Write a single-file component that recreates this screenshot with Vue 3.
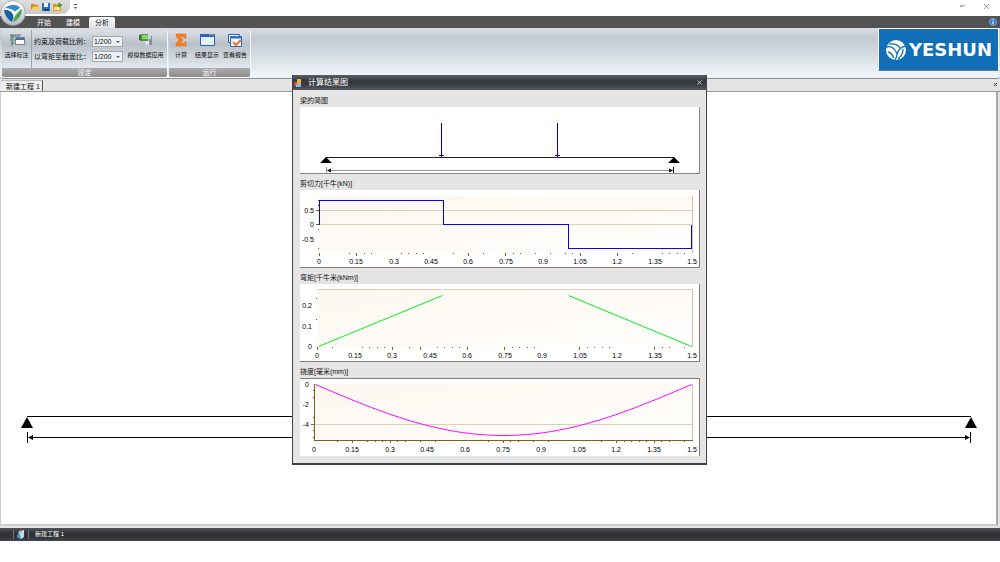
<script setup>
import { ref } from 'vue'

const scaleA = ref('1/200')
const scaleB = ref('1/200')

const xTexts = ['0', '0.15', '0.3', '0.45', '0.6', '0.75', '0.9', '1.05', '1.2', '1.35', '1.5']
const spread = (start, end) =>
  xTexts.map((text, i) => ({ text, x: Math.round(start + ((end - start) * i) / 10) }))

const sag = Array.from({ length: 95 }, (_, i) => {
  const x = 15 + i * 4
  return `${x},${(6 + 51 * Math.sin((Math.PI * i) / 94)).toFixed(1)}`
}).join(' ')

const charts = [
  {
    id: 'shear', title: '剪切力[千牛(kN)]', left: 19, top: 6, bottom: 63, color: '#0000ff',
    grid: [20, 34], major: [19, 56, 168, 205, 280, 317],
    minor: [49, 64, 71, 101, 108, 116, 123, 153, 183, 213, 220, 235, 250, 265, 272, 332, 362, 369, 377, 384],
    yMajor: [20, 34], yMinor: [10, 15, 39, 58],
    yTexts: [{ text: '0.5', y: 23 }, { text: '0', y: 37 }, { text: '-0.5', y: 52 }], yx: 14,
    lines: ['19,34 19,10 143,10 143,34 268,34 268,58 391,58 391,34'], sharp: true
  },
  {
    id: 'moment', title: '弯矩[千牛米(kNm)]', left: 17, top: 5, bottom: 63, color: '#00f020',
    grid: [5], major: [17, 92, 120, 167, 204, 279, 354],
    minor: [32, 62, 69, 77, 84, 109, 137, 144, 152, 159, 212, 219, 227, 234, 287, 294, 302, 309, 362, 369, 384],
    yMajor: [], yMinor: [14, 35],
    yTexts: [{ text: '0.2', y: 24 }, { text: '0.1', y: 45 }, { text: '0', y: 65 }], yx: 12,
    lines: ['18,62 142,11', '268,11 391,62']
  },
  {
    id: 'sag', title: '挠度[毫米(mm)]', left: 14, top: 6, bottom: 62, color: '#ff00ff', axis: true,
    grid: [46], major: [52, 90, 203, 316, 354],
    minor: [37, 67, 75, 82, 97, 105, 120, 135, 188, 210, 218, 233, 248, 301, 324, 331, 339, 346, 361, 369, 384],
    yMajor: [46], yMinor: [12, 19, 39, 52, 59],
    yTexts: [{ text: '0', y: 9 }, { text: '-2', y: 29 }, { text: '-4', y: 49 }], yx: 9,
    lines: [sag]
  }
]
</script>

<template>
  <div class="app">
    <header class="top">
      <button class="orb" aria-label="菜单">
        <svg viewBox="0 0 26 26" width="26" height="26">
          <defs>
            <linearGradient id="orbBg" x1="0" y1="0" x2="0" y2="1">
              <stop offset="0" stop-color="#ffffff" /><stop offset="1" stop-color="#b4bac4" />
            </linearGradient>
          </defs>
          <circle cx="13" cy="13" r="12.4" fill="url(#orbBg)" stroke="#9aa0aa" stroke-width=".8" />
          <path d="M4 9Q10 3 18 6L22 10L15 11Q8 7 4 9Z" fill="#2f8cc4" />
          <path d="M4 10Q10 9 13 14Q14 18 12 22Q5 18 4 10Z" fill="#1a629e" />
          <path d="M22 9Q22 18 13 22Q15 14 22 9Z" fill="#4aa54b" />
          <path d="M5 9Q12 9 14 15Q17 10 22 8" fill="none" stroke="#fff" stroke-width="1.4" />
        </svg>
      </button>
      <div class="titlebar">
        <div class="quick">
          <button aria-label="打开">
            <svg viewBox="0 0 10 10" width="10" height="10"><path d="M1 2h3l1 1h3v5H1Z" fill="#c8892b" /><path d="M1 8L3 4.500H10L8 8Z" fill="#ffd05c" /></svg>
          </button>
          <button aria-label="保存">
            <svg viewBox="0 0 10 10" width="10" height="10"><path d="M1 1h8v8H1Z" fill="#2f6fb8" /><path d="M3 1h4v4H3Z" fill="#e8f4ff" /><path d="M3 7h5v2H3Z" fill="#143d70" /></svg>
          </button>
          <button aria-label="另存为">
            <svg viewBox="0 0 10 10" width="10" height="10"><path d="M1 2h3l1 1h4v6H1Z" fill="#d59b22" /><path d="M2 5h6v3H2Z" fill="#ffe47c" /><path d="M5 3L8 0V2H10V4H8V6Z" fill="#4d9b38" /></svg>
          </button>
        </div>
        <button class="more" aria-label="自定义">
          <svg viewBox="0 0 5 6" width="5" height="6"><path d="M1 .5H4" stroke="#555" /><path d="M1 3H4L2.500 5Z" fill="#555" /></svg>
        </button>
        <div class="window-buttons">
          <button aria-label="最小化"><svg viewBox="0 0 7 7" width="7" height="7"><path d="M1 2.500H6M1 3.500H4" stroke="#999" stroke-width=".8" /></svg></button>
          <button aria-label="关闭"><svg viewBox="0 0 7 7" width="7" height="7"><path d="M1 1L6 6M6 1L1 6" stroke="#888" stroke-width=".8" /></svg></button>
        </div>
      </div>
      <nav class="tabs">
        <button>开始</button>
        <button>建模</button>
        <button class="active">分析</button>
        <svg class="info" viewBox="0 0 8 8" width="8" height="8"><circle cx="4" cy="4" r="3.500" fill="#3478c8" stroke="#9cc4ef" stroke-width=".7" /><path d="M4 1.500V2.500M4 3.300V6.300" stroke="#fff" stroke-width="1.100" /></svg>
      </nav>
    </header>

    <section class="ribbon">
      <div class="group group-set">
        <div class="group-body">
          <button class="tool tool-mark">
            <svg viewBox="0 0 16 14" width="16" height="14"><path d="M1 2H11V4H4V6H1Z" fill="#9aa4ad" /><path d="M1 2H12M3 2V13M1 7H6" stroke="#68747b" fill="none" /><path d="M2 4H5M2 10H5" stroke="#4ba55c" stroke-width="2" /><path d="M6.500 4.500H15.500V11.500H6.500Z" fill="#fff" stroke="#6f8094" /><path d="M7 5H15V7H7Z" fill="#446aa5" /></svg>
            <span>选择标注</span>
          </button>
          <div class="scales">
            <div class="scale"><label for="scale-a">约束及荷载比例：</label><span class="combo"><select id="scale-a" v-model="scaleA"><option>1/200</option><option>1/100</option></select></span></div>
            <div class="scale"><label for="scale-b">以弯矩至截面比：</label><span class="combo"><select id="scale-b" v-model="scaleB"><option>1/200</option><option>1/100</option></select></span></div>
          </div>
          <button class="tool tool-apply">
            <svg viewBox="0 0 16 14" width="16" height="14"><path d="M2 1H10V8H2Z" fill="#4c9d3e" /><path d="M4 2H10V6H4Z" fill="#8bd168" /><path d="M1 2H3V7H1Z" fill="#456753" /><path d="M7 8H13V12H8Z" fill="#dfe5ea" /><path d="M13 3H14V12H11V6H13Z" fill="#8292a4" /></svg>
            <span>模拟数据应用</span>
          </button>
        </div>
        <div class="group-name">设定</div>
      </div>
      <div class="group group-run">
        <div class="group-body">
          <button class="tool tool-calc">
            <svg viewBox="0 0 16 14" width="16" height="14"><path d="M3 1H13V5H11L10 3.500H7L10 7L7 10.500H11L12 9H13V13H3V11L6 7L3 3Z" fill="#f58220" stroke="#d95f12" stroke-width=".5" /></svg>
            <span>计算</span>
          </button>
          <button class="tool tool-show">
            <svg viewBox="0 0 16 14" width="16" height="14"><path d="M1.500 1.500H15.500V12.500H1.500Z" fill="#e8f2fc" stroke="#2a62b8" /><path d="M1 1H16V4H1Z" fill="#2a62c8" /><path d="M10 2H12M13 2H15" stroke="#9cdb6c" /></svg>
            <span>结果显示</span>
          </button>
          <button class="tool tool-report">
            <svg viewBox="0 0 16 14" width="16" height="14"><path d="M1.500 1.500H12.500V9.500H1.500Z" fill="#fff" stroke="#2a62b8" /><path d="M3.500 3.500H14.500V13.500H3.500Z" fill="#f1f6fd" stroke="#2a62b8" /><path d="M3 3H15V5.500H3Z" fill="#2a6fd2" /><path d="M6 9L9 12L14 7" fill="none" stroke="#f0752a" stroke-width="2" /></svg>
            <span>查看报告</span>
          </button>
        </div>
        <div class="group-name">运行</div>
      </div>
      <div class="brand">
        <svg viewBox="0 0 22 22" width="22" height="22">
          <circle cx="11" cy="11" r="10" fill="#fff" />
          <path d="M1 8Q9 6 12 15Q14 8 21 7M12 15Q12 18 10 21M4 5Q12 4 15 9M3 13Q6 13 9 19M13 20Q18 16 18 10" fill="none" stroke="#116fb8" stroke-width="1.300" />
        </svg>
        <span>YESHUN</span>
      </div>
    </section>

    <div class="doc-tabs">
      <button class="doc-tab">新建工程 1</button>
      <button class="doc-close" aria-label="关闭文档"><svg viewBox="0 0 5 5" width="5" height="5"><path d="M1 1L4 4M4 1L1 4" stroke="#444" /></svg></button>
    </div>

    <main class="canvas">
      <div class="beam">
        <svg viewBox="0 0 12 11" width="12" height="11"><path d="M6 0L12 11H0Z" /></svg>
        <svg viewBox="0 0 12 11" width="12" height="11"><path d="M6 0L12 11H0Z" /></svg>
      </div>
      <div class="span-line">
        <svg viewBox="0 0 5 5" width="5" height="5"><path d="M0 2.500L5 0V5Z" /></svg>
        <i></i>
        <svg viewBox="0 0 5 5" width="5" height="5"><path d="M5 2.500L0 0V5Z" /></svg>
      </div>
    </main>

    <footer class="status">
      <span class="status-icon"><svg viewBox="0 0 8 9" width="8" height="9"><path d="M2 1L7 0L7 7L4 9L0 7Z" fill="#b8e3f5" /><path d="M2 1L0 7L4 9L3 5Z" fill="#4792c2" /><path d="M3 0H5V2H3Z" fill="#e0764a" /></svg></span>
      <span>新建工程 1</span>
    </footer>

    <section class="dialog" role="dialog" aria-labelledby="dialog-title">
      <header class="dialog-bar">
        <svg viewBox="0 0 8 8" width="8" height="8"><path d="M3 0H7V5H3Z" fill="#e8b43a" /><path d="M0 3H3V7H0Z" fill="#d84a35" /><path d="M2 5H7V8H2Z" fill="#8db4e8" /></svg>
        <h1 id="dialog-title">计算结果图</h1>
        <button aria-label="关闭对话框"><svg viewBox="0 0 5 5" width="5" height="5"><path d="M.5 .5L4.500 4.500M4.500 .5L.5 4.500" stroke="#c3cbd4" /></svg></button>
      </header>
      <div class="dialog-body">
        <figure>
          <figcaption>梁的简图</figcaption>
          <svg class="panel model" viewBox="0 0 400 67">
            <g shape-rendering="crispEdges" fill="none">
              <path d="M26 50.500H374" stroke="#222" />
              <path d="M26 63.500H374" stroke="#999" />
              <path d="M26.500 60V66" stroke="#999" />
              <path d="M373.500 60V66" stroke="#111" />
              <path d="M141.500 16V50M139 48.500H144M257.500 16V50M255 48.500H260" stroke="#0000d8" />
            </g>
            <path d="M26 50L32 56H20ZM374 50L380 56H368ZM27 63.500L31 61.500V65.500ZM373 63.500L369 61.500V65.500Z" />
          </svg>
        </figure>
        <figure v-for="c in charts" :key="c.id">
          <figcaption>{{ c.title }}</figcaption>
          <svg class="panel" :class="c.id" viewBox="0 0 400 78">
            <defs>
              <linearGradient :id="'bg-' + c.id" x1="0" y1="0" x2="1" y2="1">
                <stop offset="0" stop-color="#fcf7ef" /><stop offset="1" stop-color="#fffefd" />
              </linearGradient>
            </defs>
            <rect :x="c.left" :y="c.top" :width="392 - c.left" :height="c.bottom - c.top" :fill="`url(#bg-${c.id})`" />
            <g shape-rendering="crispEdges" fill="none">
              <path v-for="y in c.grid" :key="y" :d="`M${c.left} ${y}.500H392`" stroke="#ddd0b4" />
              <path :d="`M392.500 ${c.top}V${c.bottom}`" stroke="#d3c4a2" />
              <path v-if="c.axis" :d="`M${c.left}.500 ${c.top}V${c.bottom}.500H393`" stroke="#80601f" />
              <path v-for="x in c.major" :key="'a' + x" :d="`M${x}.500 ${c.bottom}v3`" stroke="#80601f" />
              <path v-for="x in c.minor" :key="'b' + x" :d="`M${x}.500 ${c.bottom}v${c.axis ? 2 : 1}`" stroke="#80601f" />
              <path v-for="y in c.yMajor" :key="'c' + y" :d="`M${c.left - 3} ${y}.500H${c.left}`" stroke="#80601f" />
              <path v-for="y in c.yMinor" :key="'d' + y" :d="`M${c.left - 1} ${y}.500H${c.left}`" stroke="#80601f" />
            </g>
            <g fill="none" :stroke="c.color" :shape-rendering="c.sharp ? 'crispEdges' : 'auto'">
              <polyline v-for="p in c.lines" :key="p" :points="p" transform="translate(0.5 0.5)" />
            </g>
            <g class="ticks">
              <text v-for="t in c.yTexts" :key="t.text" :x="c.yx" :y="t.y" text-anchor="end">{{ t.text }}</text>
              <text v-for="t in spread(c.left, 392)" :key="'x' + t.text" :x="t.x" y="74" text-anchor="middle">{{ t.text }}</text>
            </g>
          </svg>
        </figure>
      </div>
    </section>
  </div>
</template>

<style>
body { margin: 0; background: #fff; }
</style>

<style scoped>
* { box-sizing: border-box; }
.app {
  position: relative;
  display: flex;
  flex-direction: column;
  min-height: calc(100vh - 21px);
  background: #e4e4e4;
  color: #111;
  font: 7px/9px "Liberation Sans", "Noto Sans CJK SC", sans-serif;
}
button, select {
  margin: 0;
  padding: 0;
  border: 0;
  background: none;
  color: inherit;
  font: inherit;
}
svg { display: block; flex: none; }
.top { position: relative; }
.orb { position: absolute; left: 0; top: 0; z-index: 2; }
.titlebar {
  display: flex;
  align-items: flex-start;
  height: 16px;
  background: #fff;
}
.quick {
  display: flex;
  gap: 1px;
  align-items: center;
  width: 70px;
  height: 14px;
  padding-left: 30px;
  border-radius: 0 0 8px 0;
  background: linear-gradient(#dedede, #c9c9c9);
}
.more { margin: 4px 0 0 3px; }
.window-buttons { display: flex; gap: 17px; margin: 3px 10px 0 auto; }
.tabs {
  display: flex;
  align-items: flex-end;
  height: 12px;
  padding: 0 3px 0 31px;
  background: #535353;
  color: #fff;
}
.tabs button { width: 26px; height: 11px; margin-right: 3px; }
.tabs .active {
  color: #111;
  border-radius: 2px 2px 0 0;
  background: linear-gradient(#fff, #dfe2e7);
}
.info { margin: 0 0 2px auto; }
.ribbon {
  display: flex;
  gap: 2px;
  height: 51px;
  padding: 2px 2px 1px;
  border-bottom: 1px solid #8c8f94;
  border-radius: 0 0 3px 3px;
  background: linear-gradient(#d9dde3, #c3c9d1 20%, #d3dae1 50%, #f2f7fb);
}
.group {
  display: flex;
  flex-direction: column;
  border-radius: 2px;
  background: linear-gradient(#dce0e6, #bac0c9 30%, #c5ccd4 45%, #e2e8ec 80%);
  box-shadow: 1px 0 0 #f3f5f7;
}
.group-set { width: 165px; }
.group-run { width: 81px; }
.group-body { display: flex; flex: 1; }
.group-name {
  height: 9px;
  color: #fff;
  text-align: center;
  background: linear-gradient(#ababab, #8c8c8c);
  border-radius: 0 0 2px 2px;
}
.tool {
  display: flex;
  flex-direction: column;
  align-items: center;
  gap: 4px;
  padding-top: 3px;
  font-size: 6px;
  white-space: nowrap;
}
.tool-mark { width: 30px; border-right: 1px solid #9ba1a9; }
.tool-apply { flex: 1; }
.tool-calc { width: 24px; }
.tool-show { width: 28px; }
.tool-report { width: 28px; }
.scales { display: flex; flex-direction: column; gap: 3px; width: 92px; padding: 5px 0 0 2px; }
.scale { display: flex; align-items: center; height: 12px; white-space: nowrap; }
.scale label { width: 58px; }
.combo { position: relative; width: 31px; height: 11px; border: 1px solid #a4aab2; background: #eef1f4; }
.combo::after {
  content: "";
  position: absolute;
  right: 2px;
  top: 4px;
  border: 2px solid transparent;
  border-top-color: #555;
  pointer-events: none;
}
.combo select { display: block; width: 100%; height: 9px; padding-left: 1px; appearance: none; }
.brand {
  display: flex;
  align-items: center;
  gap: 2px;
  width: 121px;
  height: 43px;
  margin: -2px -1px 0 auto;
  padding-left: 6px;
  border: 1px solid #fff;
  border-bottom-color: #777;
  background: #116fb8;
  color: #fff;
  font: bold 18px/20px "DejaVu Sans", sans-serif;
}
.doc-tabs { display: flex; justify-content: space-between; height: 13px; padding: 1px 3px 0 1px; border-bottom: 1px solid #999; }
.doc-tab { padding: 0 2px 0 5px; border-right: 1px solid #555; border-top: 1px solid #bbb; background: #eee; }
.doc-close { align-self: flex-start; margin: 2px -1px 0 0; }
.canvas {
  flex: 1;
  margin-right: 2px;
  padding: 324px 25px 0 26px;
  border: solid #ccc;
  border-width: 0 2px 2px 1px;
  border-right-color: #aaa;
  background: #fff;
}
.beam { display: flex; justify-content: space-between; border-top: 1px solid #000; }
.beam svg { margin: 0 -6px; }
.span-line {
  display: flex;
  align-items: center;
  height: 11px;
  margin-top: 4px;
  border: solid #000;
  border-width: 0 1px;
}
.span-line i { flex: 1; height: 1px; background: #000; }
.status {
  display: flex;
  align-items: center;
  gap: 6px;
  height: 13px;
  margin-top: 2px;
  padding-left: 13px;
  color: #fff;
  background: linear-gradient(#51545e, #303236 40%, #303236 70%, #42464e);
  font-size: 6px;
}
.status-icon { padding: 0 3px; border: solid #6b6e74; border-width: 0 1px; }
.dialog {
  position: absolute;
  left: calc(50% - 208px);
  top: 75px;
  width: 415px;
  border: solid #3f424b;
  border-width: 0 1px 2px;
  background: #e5e5e5;
}
.dialog-bar {
  display: flex;
  align-items: center;
  gap: 6px;
  height: 15px;
  padding: 0 4px 0 1px;
  color: #fff;
  background: linear-gradient(#5b5f6b, #34363b 40%, #3c3f45 70%, #545862);
}
.dialog-bar h1 { margin: 0; font: 8px/12px "Liberation Sans", "Noto Sans CJK SC", sans-serif; }
.dialog-bar button { margin-left: auto; }
.dialog-body { display: flex; flex-direction: column; gap: 3px; padding: 4px 6px 7px 7px; }
figure { margin: 0; }
figcaption { height: 13px; line-height: 13px; }
.panel { width: 100%; background: #fff; box-shadow: inset -1px -1px #8a7970; }
.model { box-shadow: inset -1px -1px #888; }
.sag { box-shadow: inset -1px 1px #8a7970; }
.ticks { font-size: 7px; fill: #000; }
</style>
